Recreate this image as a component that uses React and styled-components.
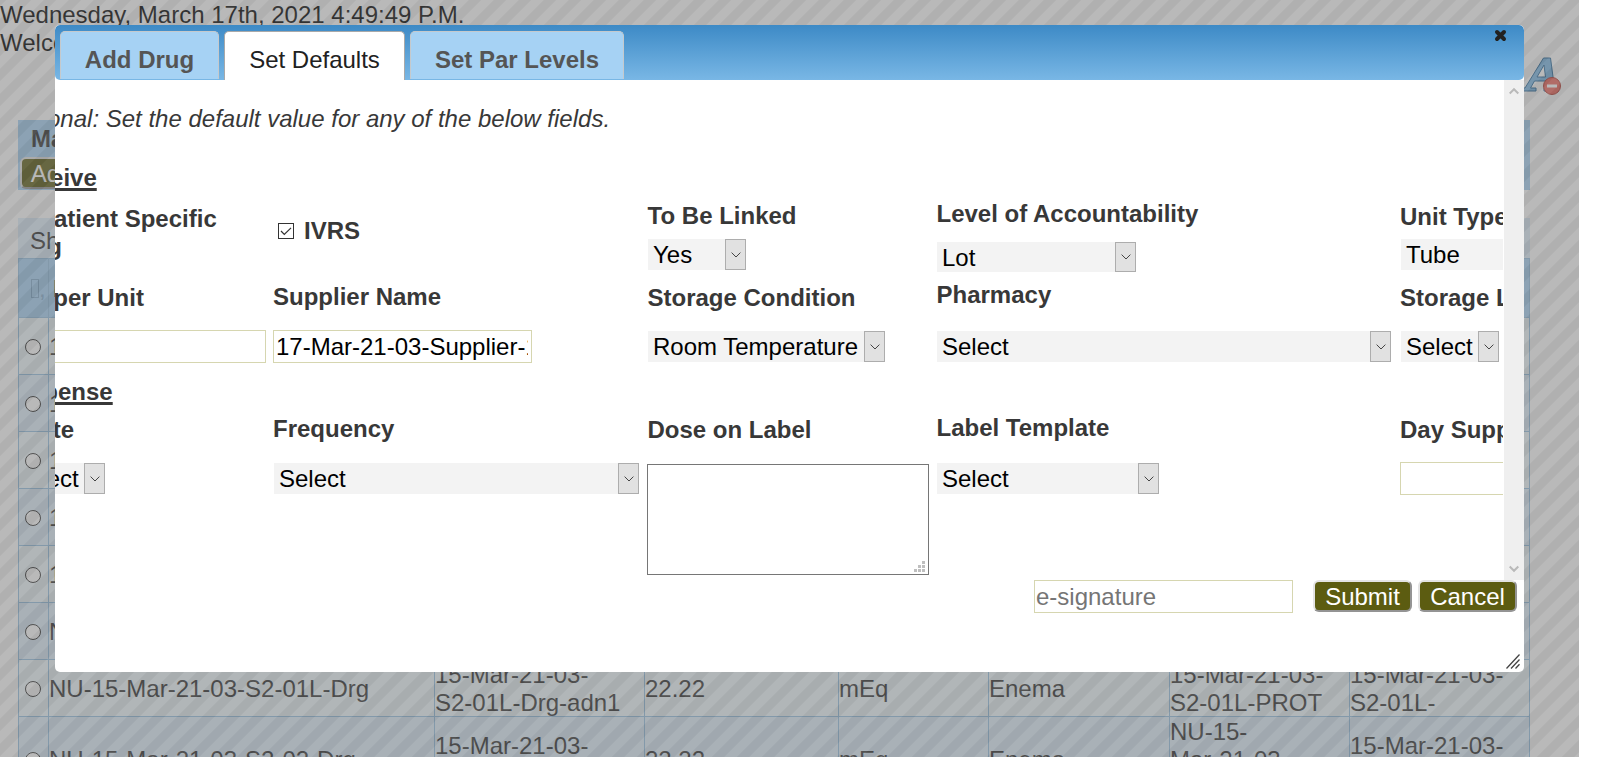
import React from "react";
import styled, { createGlobalStyle, css } from "styled-components";

const Global = createGlobalStyle`
  * { box-sizing: border-box; }
  body {
    margin: 0;
    background: #fff;
    overflow: hidden;
    font: 24px/28px "Liberation Sans", Arial, sans-serif;
  }
`;

/* ---------- page behind the dialog ---------- */

const Screen = styled.div`
  position: relative;
  width: 1579px;
  height: 757px;
  overflow: hidden;
  background: #fff;
`;

const Greeting = styled.header`
  height: 120px;
  padding-top: 1px;
  color: #000;
  white-space: nowrap;
`;

const ManageBar = styled.section`
  width: 1512px;
  height: 70px;
  margin-left: 18px;
  padding: 5px 2px;
  background: #a6d2f5;
  color: #333;
  font-weight: bold;
`;

const ManageTitle = styled.div`
  padding-left: 11px;
  margin-bottom: 4px;
`;

const Button = styled.button`
  height: 32px;
  width: ${(p) => p.$width || 98}px;
  padding: 1px 0 0;
  border: 2px solid;
  border-color: #e4e4e4 #949494 #949494 #e4e4e4;
  border-radius: 6px;
  background: #5c5c11;
  color: #fff;
  font: 24px/27px "Liberation Sans", Arial, sans-serif;
`;

const Grid = styled.section`
  width: 1512px;
  margin: 28px 0 0 18px;
  color: #333;
  border-right: 1px solid #94c0e2;
`;

const ShowBar = styled.div`
  height: 40px;
  padding: 9px 12px;
  background: #dfeffc;
  margin-right: -1px;
`;

const Row = styled.div`
  display: grid;
  grid-template-columns: 30px 386px 210px 194px 150px 181px 180px 180px;
  height: ${(p) => p.$height || 57}px;
  background: ${(p) => (p.$head ? "#a6d2f5" : p.$even ? "#dfeffc" : "#eff9fd")};
  border-top: 1px solid #94c0e2;
  font-weight: ${(p) => (p.$head ? "bold" : "normal")};
`;

const Cell = styled.div`
  display: flex;
  align-items: center;
  padding: 1px 0 0 ${(p) => p.$pad || 0}px;
  border-left: 1px solid #94c0e2;
  overflow: hidden;
  white-space: pre-line;
`;

const Radio = styled.span`
  width: 16px;
  height: 16px;
  margin-left: 6px;
  border: 1px solid #333;
  border-radius: 50%;
  background: #fff;
`;

const SortBox = styled.span`
  width: 8px;
  height: 19px;
  margin: -1px 0 0 12px;
  border: 1px solid #7fa9cb;
  color: #7fa9cb;
`;

const SortMark = styled.span`
  color: #7fa9cb;
  font-weight: normal;
`;

const FontIcon = styled.svg`
  position: absolute;
  left: 1508px;
  top: 54px;
`;

const Overlay = styled.div`
  position: absolute;
  inset: 0;
  opacity: 0.5;
  background: linear-gradient(135deg, #616161 11%, #727272 14% 36%, #616161 39% 61%, #727272 64% 86%, #616161 89%);
  background-size: 25px 25px;
`;

/* ---------- dialog ---------- */

const Dialog = styled.div`
  position: absolute;
  left: 55px;
  top: 25px;
  width: 1469px;
  height: 647px;
  display: flex;
  flex-direction: column;
  background: #fff;
  border-radius: 5px;
  overflow: hidden;
`;

const TitleBar = styled.div`
  display: flex;
  flex: none;
  gap: 5px;
  height: 55px;
  padding: 6px 17px 0 5px;
  border-radius: 5px;
  background: linear-gradient(#3d8ac6, #79b7e5);
`;

const Tab = styled.div`
  width: ${(p) => p.$width}px;
  height: 48px;
  padding-top: 14px;
  text-align: center;
  border: 1px solid #c5c9cc;
  border-bottom: 0;
  border-radius: 5px 5px 0 0;
  background: #a6d2f4;
  color: #555;
  font-weight: bold;
  ${(p) =>
    p.$active &&
    css`
      height: 49px;
      border-color: #a9a9a9;
      background: #fff;
      color: #212121;
      font-weight: normal;
    `}
`;

const Close = styled.svg`
  margin: -2px 0 0 auto;
`;

const Body = styled.div`
  display: flex;
  flex: none;
  height: 500px;
`;

const Viewport = styled.div`
  width: 1448px;
  margin-right: 1px;
  overflow: hidden;
`;

const Scrollbar = styled.div`
  display: flex;
  flex-direction: column;
  justify-content: space-between;
  align-items: center;
  width: 20px;
  padding: 7px 1px 7px 0;
  background: #efefef;
`;

const Form = styled.div`
  width: 1700px;
  margin-left: -49px;
  padding-top: 25px;
  color: #383838;
`;

const Hint = styled.p`
  margin: 0 0 31px -3px;
  font-style: italic;
`;

const Heading = styled.div`
  height: 28px;
  margin-bottom: ${(p) => p.$gap || 0}px;
  font-weight: bold;
  text-decoration: underline;
  text-decoration-thickness: 3px;
  text-underline-offset: 2px;
`;

const Fields = styled.div`
  display: grid;
  grid-template-columns: 267px 374px 289px 464px 300px;
  height: ${(p) => p.$height}px;
`;

const FieldBox = styled.div`
  padding-top: ${(p) => p.$top}px;
`;

const Label = styled.div`
  margin-bottom: ${(p) => p.$gap}px;
  padding-left: ${(p) => p.$indent || 0}px;
  font-weight: bold;
  white-space: nowrap;
`;

const CheckLabel = styled.div`
  width: 240px;
  font-weight: bold;
`;

const Check = styled.svg`
  margin: 0 ${(p) => p.$space}px 0 5px;
  vertical-align: 0;
`;

const SelectBox = styled.div`
  display: flex;
  justify-content: space-between;
  width: ${(p) => p.$width}px;
  height: ${(p) => p.$height || 31}px;
  margin-left: 1px;
  padding-left: 5px;
  background: #f3f3f3;
  color: #000;
  line-height: 31px;
  white-space: nowrap;
`;

const Arrow = styled.span`
  display: flex;
  align-items: center;
  justify-content: center;
  width: 21px;
  border: 1px solid #adadad;
  background: #e1e1e1;
`;

const Input = styled.input`
  display: block;
  width: ${(p) => p.$width || 259}px;
  height: 33px;
  padding: 0 3px 0 2px;
  border: 1px solid #d6d6b0;
  background: #fff;
  color: #000;
  font: 24px "Liberation Sans", Arial, sans-serif;
  &::placeholder { color: #757575; }
`;

const Area = styled.div`
  display: flex;
  align-items: flex-end;
  justify-content: flex-end;
  width: 282px;
  height: 111px;
  padding: 2px 3px;
  border: 1px solid #767676;
`;

const Actions = styled.div`
  display: flex;
  justify-content: flex-end;
  gap: 6px;
  padding-right: 7px;
`;

const Signature = styled(Input)`
  margin-right: 14px;
  padding-left: 1px;
`;

const Grip = styled.svg`
  margin: auto 4px 3px auto;
`;

const Chevron = () => (
  <svg width="10" height="6" viewBox="0 0 10 6" fill="none" stroke="#444">
    <path d="M.6.6 5 5 9.4.6" />
  </svg>
);

const Select = ({ children, ...rest }) => (
  <SelectBox {...rest}>
    {children}
    <Arrow><Chevron /></Arrow>
  </SelectBox>
);

const Field = ({ label, top, gap, indent, children }) => (
  <FieldBox $top={top}>
    <Label $gap={gap} $indent={indent}>{label}</Label>
    {children}
  </FieldBox>
);

const Checkbox = ({ space }) => (
  <Check $space={space} width="16" height="16" viewBox="0 0 16 16" fill="none" stroke="#333">
    <rect x=".5" y=".5" width="15" height="15" fill="#fff" />
    <path d="m3 8 3.300 3.500L13 4.800" strokeWidth="1.2" />
  </Check>
);

const rows = [
  ["15-Mar-21-03-S1-01L-Drg"],
  ["15-Mar-21-03-S1-02-Drg"],
  ["15-Mar-21-03-S1-03-Drg"],
  ["17-Mar-21-03-S1-01L-Drg"],
  ["17-Mar-21-03-S1-02-Drg"],
  ["NU-15-Mar-21-03-S1-01L-Drg"],
  ["NU-15-Mar-21-03-S2-01L-Drg", "15-Mar-21-03-\nS2-01L-Drg-adn1", "22.22", "mEq", "Enema", "15-Mar-21-03-\nS2-01L-PROT", "15-Mar-21-03-\nS2-01L-"],
  ["NU-15-Mar-21-03-S2-02-Drg", "15-Mar-21-03-\nS2-02-Drg-adn1", "22.22", "mEq", "Enema", "NU-15-\nMar-21-03-\nS2-02-PROT", "15-Mar-21-03-\nS2-02-"],
];
const columns = [0, 1, 2, 3, 4, 5, 6];

export default function App() {
  return (
    <>
      <Global />
      <Screen>
        <Greeting>
          <div>Wednesday, March 17th, 2021 4:49:49 P.M.</div>
          <div>Welcome</div>
        </Greeting>
        <ManageBar>
          <ManageTitle>Manage Drugs</ManageTitle>
          <Button $width={123}>Add Drug</Button>
        </ManageBar>
        <Grid>
          <ShowBar>Show</ShowBar>
          <Row $head $height={59}>
            <Cell><SortBox /><SortMark>,</SortMark></Cell>
            <Cell $pad={4}>Drug Name</Cell>
            {columns.slice(1).map((c) => <Cell key={c} />)}
          </Row>
          {rows.map((row, i) => (
            <Row key={i} $even={i % 2 === 1} $height={i === 7 ? 86 : 57}>
              <Cell><Radio /></Cell>
              {columns.map((c) => <Cell key={c}>{row[c]}</Cell>)}
            </Row>
          ))}
        </Grid>
        <FontIcon width="56" height="44" viewBox="0 0 56 44">
          <path
            d="M13 34h4L35.500 4h7l4 30h4v3H36v-3h3l-1-7H26.500l-4 7H28v3H13zM29 23h8.500l-1.500-12z"
            fill="#7ab8e6"
            stroke="#28699b"
            strokeWidth="1"
          />
          <circle cx="44" cy="32" r="8.5" fill="#f0665c" stroke="#b83a30" />
          <rect x="39" y="30.500" width="10" height="3" fill="#fff" />
        </FontIcon>
        <Overlay />
        <Dialog>
          <TitleBar>
            <Tab $width={159}>Add Drug</Tab>
            <Tab $width={181} $active>Set Defaults</Tab>
            <Tab $width={214}>Set Par Levels</Tab>
            <Close width="13" height="13" viewBox="0 0 13 13" stroke="#222" strokeWidth="4" strokeLinecap="round">
              <path d="m3 3 7 7M10 3l-7 7" />
            </Close>
          </TitleBar>
          <Body>
            <Viewport>
              <Form>
                <Hint>Optional: Set the default value for any of the below fields.</Hint>
                <Heading $gap={8}>Receive</Heading>
                <Fields $height={80}>
                  <FieldBox $top={5}><CheckLabel><Checkbox space={11} />Patient Specific Drug</CheckLabel></FieldBox>
                  <FieldBox $top={17}><CheckLabel><Checkbox space={10} />IVRS</CheckLabel></FieldBox>
                  <Field label="To Be Linked" top={2} gap={9} indent={0.6}><Select $width={98}>Yes</Select></Field>
                  <Field label="Level of Accountability" top={0} gap={14} indent={0.5}><Select $width={199} $height={30}>Lot</Select></Field>
                  <Field label="Unit Type" top={3} gap={8}><Select $width={150}>Tube</Select></Field>
                </Fields>
                <Fields $height={98}>
                  <Field label="Qty per Unit" top={4} gap={18} indent={0.6}><Input readOnly value="" $width={260} /></Field>
                  <Field label="Supplier Name" top={3} gap={19}><Input readOnly value="17-Mar-21-03-Supplier-1" /></Field>
                  <Field label="Storage Condition" top={4} gap={19} indent={0.5}><Select $width={237}>Room Temperature</Select></Field>
                  <Field label="Pharmacy" top={1} gap={22} indent={0.5}><Select $width={454}>Select</Select></Field>
                  <Field label="Storage Location" top={4} gap={19}><Select $width={98}>Select</Select></Field>
                </Fields>
                <Heading>Dispense</Heading>
                <Fields $height={180}>
                  <Field label="Route" top={10} gap={19}><Select $width={98}>Select</Select></Field>
                  <Field label="Frequency" top={9} gap={20}><Select $width={365}>Select</Select></Field>
                  <Field label="Dose on Label" top={10} gap={20} indent={0.5}>
                    <Area>
                      <svg width="11" height="11" viewBox="0 0 11 11" fill="#bfbfbf">
                        <path d="M8 0h3v3H8zM4 4h3v3H4zM8 4h3v3H8zM0 8h3v3H0zM4 8h3v3H4zM8 8h3v3H8z" />
                      </svg>
                    </Area>
                  </Field>
                  <Field label="Label Template" top={8} gap={21} indent={0.5}><Select $width={222}>Select</Select></Field>
                  <Field label="Day Supply" top={10} gap={18}><Input readOnly value="" /></Field>
                </Fields>
              </Form>
            </Viewport>
            <Scrollbar>
              <svg width="10" height="8" viewBox="0 0 10 8" fill="none" stroke="#b9b9b9" strokeWidth="2"><path d="m.7 6.500 4.300-4.300 4.300 4.300" /></svg>
              <svg width="10" height="8" viewBox="0 0 10 8" fill="none" stroke="#b9b9b9" strokeWidth="2"><path d="m.7 1.500 4.300 4.300 4.300-4.300" /></svg>
            </Scrollbar>
          </Body>
          <Actions>
            <Signature placeholder="e-signature" />
            <Button $width={99}>Submit</Button>
            <Button $width={99}>Cancel</Button>
          </Actions>
          <Grip width="14" height="15" viewBox="0 0 14 15" fill="none" stroke="#444" strokeWidth="1.3">
            <path d="M.5 14.500 13.500.5M5 14.500l8.500-9M9.500 14.500l4-4.300" />
          </Grip>
        </Dialog>
      </Screen>
    </>
  );
}
